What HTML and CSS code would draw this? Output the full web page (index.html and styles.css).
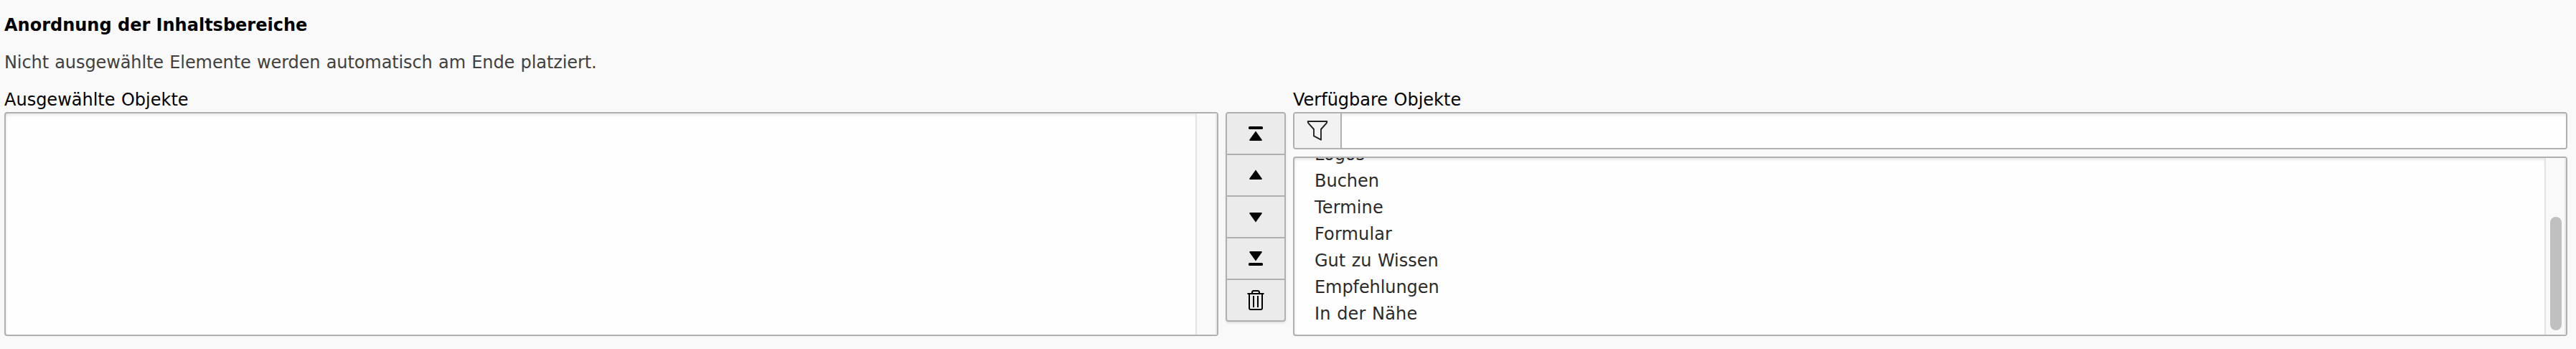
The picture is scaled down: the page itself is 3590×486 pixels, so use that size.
FILE: index.html
```html
<!DOCTYPE html>
<html lang="de">
<head>
<meta charset="utf-8">
<title>Anordnung der Inhaltsbereiche</title>
<link rel="stylesheet" href="styles.css">
</head>
<body>
<main class="field">
  <h1 class="title">Anordnung der Inhaltsbereiche</h1>
  <p class="description">Nicht ausgewählte Elemente werden automatisch am Ende platziert.</p>
  <div class="picker">
    <section class="selected">
      <h2 class="label">Ausgewählte Objekte</h2>
      <div class="listbox">
        <div class="options"></div>
        <div class="track"></div>
      </div>
    </section>
    <div class="buttons">
      <button class="btn" aria-label="Ganz nach oben"><svg viewBox="0 0 32 32"><rect x="6" y="6" width="20" height="4" rx="1.6"/><path d="M16 12.6 24.6 24.4Q25.4 26 23.8 26H8.2Q6.6 26 7.4 24.4Z"/></svg></button>
      <button class="btn" aria-label="Nach oben"><svg viewBox="0 0 32 32"><path d="M16 8.6 24.6 20.4Q25.4 22 23.8 22H8.2Q6.6 22 7.4 20.4Z"/></svg></button>
      <button class="btn" aria-label="Nach unten"><svg viewBox="0 0 32 32"><path d="M16 23.4 24.6 11.6Q25.4 10 23.8 10H8.2Q6.6 10 7.4 11.6Z"/></svg></button>
      <button class="btn" aria-label="Ganz nach unten"><svg viewBox="0 0 32 32"><rect x="6" y="22" width="20" height="4" rx="1.6"/><path d="M16 19.4 24.6 7.6Q25.4 6 23.8 6H8.2Q6.6 6 7.4 7.6Z"/></svg></button>
      <button class="btn" aria-label="Entfernen"><svg viewBox="0 0 32 32"><g fill="none" stroke="#000" stroke-width="2"><path d="M4.5 7H27.5M7 7V27Q7 29 9 29H23Q25 29 25 27V7M11 7V5.500Q11 3 13 3H19Q21 3 21 5.500V7M13 10V26M19 10V26"/></g></svg></button>
    </div>
    <section class="available">
      <h2 class="label">Verfügbare Objekte</h2>
      <div class="filter">
        <span class="addon"><svg viewBox="0 0 32 32"><path d="M2.700 3H29.300Q29.500 4.600 28.300 5.800L21 14V28.700L11 23.300V14L3.700 5.800Q2.500 4.600 2.700 3Z" fill="none" stroke="#222" stroke-width="1.900" stroke-linejoin="round"/></svg></span>
        <input class="query" type="text" aria-label="Filter">
      </div>
      <div class="listbox list-available">
        <ul class="options">
          <li>Logos</li>
          <li>Buchen</li>
          <li class="loose">Termine</li>
          <li class="loose">Formular</li>
          <li>Gut zu Wissen</li>
          <li class="tight">Empfehlungen</li>
          <li class="loose">In der Nähe</li>
        </ul>
        <div class="track"><div class="thumb"></div></div>
      </div>
    </section>
  </div>
</main>
</body>
</html>
```
FILE: styles.css
```css
* { box-sizing: border-box; }
body {
  margin: 0;
  background: #f9f9f9;
  color: #000;
  font: 24px/36px Verdana, "DejaVu Sans", sans-serif;
}
.field { height: 486px; padding: 17px 12px 18px 6px; overflow: hidden; }
.title { margin: 0 0 16px; font-size: 24px; font-weight: 700; line-height: 36px; }
.description { margin: 0 0 16px; color: #404040; word-spacing: .8px; letter-spacing: -.1px; }
.picker { display: grid; grid-template-columns: 1692px 84px 1776px; column-gap: 10px; }
.selected, .available { display: flex; flex-direction: column; height: 347px; }
.label { margin: 0; height: 35px; font-size: 24px; font-weight: 400; line-height: 36px; word-spacing: .8px; }
.listbox {
  flex: 1;
  min-height: 0;
  display: flex;
  border: 2px solid #b0b0b0;
  border-radius: 4px;
  background: #fefefe;
  overflow: hidden;
}
.options {
  flex: 1;
  margin: 0;
  padding: 0 28px;
  list-style: none;
  color: #2b2b2b;
  word-spacing: .8px;
  box-shadow: inset 0 4px 4px -2px rgba(0, 0, 0, .1), inset 4px 0 4px -3px rgba(0, 0, 0, .06);
}
.list-available .options {
  display: flex;
  flex-direction: column;
  justify-content: flex-end;
  padding-bottom: 11px;
}
.options li { flex: none; height: 37px; line-height: 38px; }
.loose { letter-spacing: .15px; }
.tight { letter-spacing: -.08px; }
.track {
  width: 30px;
  border-left: 2px solid #e4e4e4;
  border-right: 2px solid #e8e8e8;
  background: #f9f9f9;
  display: flex;
  flex-direction: column;
  justify-content: flex-end;
  align-items: center;
  padding-bottom: 6px;
}
.thumb { width: 16px; height: 158px; margin-left: 2px; border-radius: 8px; background: #c0c0c0; }
.buttons {
  display: flex;
  flex-direction: column;
  height: 292px;
  margin-top: 35px;
  border: 2px solid #b0b0b0;
  border-radius: 4px;
  background: #ebebeb;
  box-shadow: 0 2px 3px rgba(0, 0, 0, .1);
}
.btn {
  display: flex;
  align-items: center;
  justify-content: center;
  flex: none;
  height: 58px;
  padding: 0;
  border: 0;
  border-bottom: 2px solid #b0b0b0;
  background: none;
}
.btn:last-child { height: 56px; border-bottom: 0; }
.btn svg { width: 32px; height: 32px; }
.filter {
  display: flex;
  height: 52px;
  margin-bottom: 10px;
  border: 2px solid #b0b0b0;
  border-radius: 4px;
  overflow: hidden;
}
.addon {
  display: flex;
  align-items: center;
  justify-content: center;
  width: 66px;
  border-right: 2px solid #b0b0b0;
  background: #f2f2f2;
}
.addon svg { width: 32px; height: 32px; }
.query {
  flex: 1;
  border: 0;
  padding: 0 12px;
  background: #fefefe;
  box-shadow: inset 0 4px 4px -2px rgba(0, 0, 0, .1);
  font: inherit;
}
```
